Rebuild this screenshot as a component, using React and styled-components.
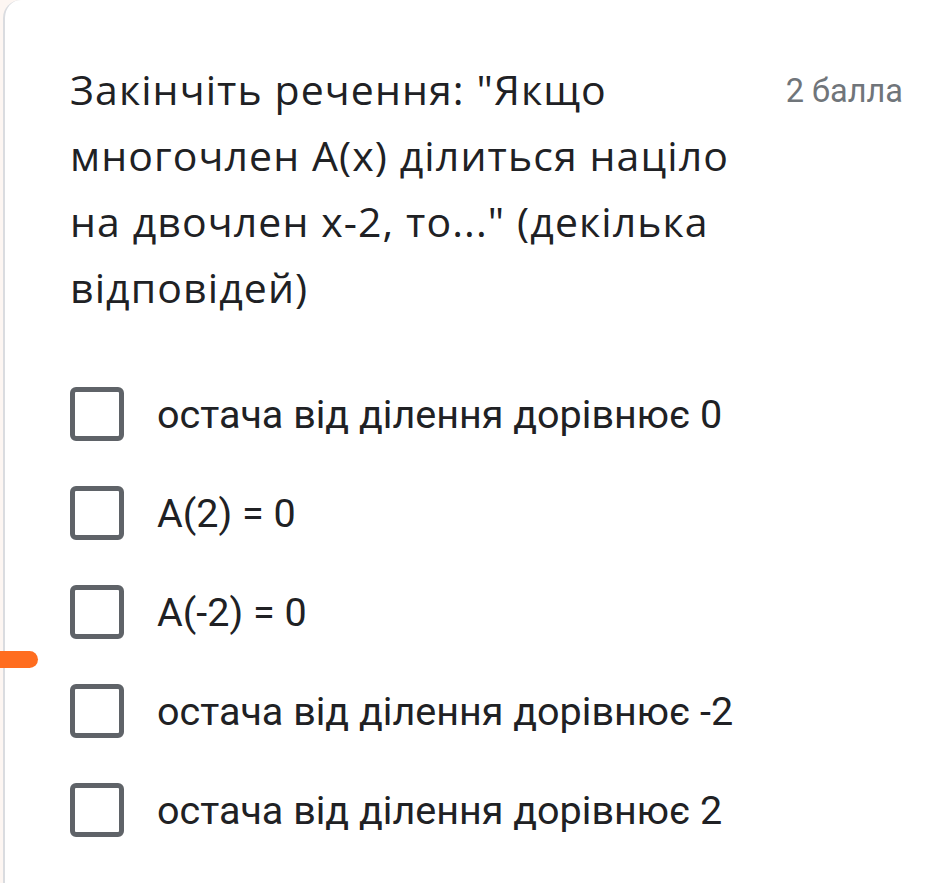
import { createGlobalStyle, styled } from "styled-components";

const GlobalStyle = createGlobalStyle`
  html, body {
    margin: 0;
    background: #fdf6f2;
  }
  body {
    font-family: Roboto, "Liberation Sans", sans-serif;
  }
`;

const TITLE_LINES = [
  'Закінчіть речення: "Якщо',
  "многочлен A(x) ділиться націло",
  'на двочлен x-2, то..." (декілька',
  "відповідей)",
];

const OPTIONS = [
  "остача від ділення дорівнює 0",
  "A(2) = 0",
  "A(-2) = 0",
  "остача від ділення дорівнює -2",
  "остача від ділення дорівнює 2",
];

const App = () => {
  return (
    <>
      <GlobalStyle />
      <Page>
        <Card>
          <Header>
            <Title>
              {TITLE_LINES.map((line, i) => (
                <TitleLine key={i}>{line}</TitleLine>
              ))}
            </Title>
            <Points>2 балла</Points>
          </Header>
          <OptionList>
            {OPTIONS.map((label, i) => (
              <Option key={i}>
                <Checkbox />
                <OptionLabel>{label}</OptionLabel>
              </Option>
            ))}
          </OptionList>
        </Card>
        <ErrorMark />
      </Page>
    </>
  );
};

export default App;

const Page = styled.div`
  position: relative;
  width: 944px;
  height: 883px;
  overflow: hidden;
  padding-left: 3px;
  box-sizing: border-box;
`;

const Card = styled.div`
  height: 100%;
  background: #fff;
  border-left: 2px solid #dadce0;
  border-top-left-radius: 18px;
  box-sizing: border-box;
  padding: 56px 41px 0 65px;
`;

const Header = styled.div`
  display: flex;
  justify-content: space-between;
  align-items: flex-start;
`;

const Title = styled.div`
  font-family: "Open Sans", "Noto Sans", sans-serif;
  font-size: 41px;
  line-height: 66px;
  letter-spacing: 1.1px;
  color: #202124;
`;

const TitleLine = styled.div`
  white-space: nowrap;
`;

const Points = styled.div`
  margin-top: 2px;
  font-family: Roboto, sans-serif;
  font-size: 32.5px;
  line-height: 66px;
  color: #70757a;
  white-space: nowrap;
`;

const OptionList = styled.div`
  display: flex;
  flex-direction: column;
  gap: 45px;
  margin-top: 67px;
`;

const Option = styled.div`
  display: flex;
  align-items: center;
  height: 54px;
`;

const Checkbox = styled.div`
  width: 54px;
  height: 54px;
  box-sizing: border-box;
  border: 5px solid #5f6368;
  border-radius: 6px;
  flex-shrink: 0;
`;

const OptionLabel = styled.div`
  margin-left: 33px;
  font-family: Roboto, sans-serif;
  font-size: 39.5px;
  color: #202124;
  white-space: nowrap;
`;

const ErrorMark = styled.div`
  position: absolute;
  left: 0;
  top: 651px;
  width: 38px;
  height: 17px;
  background: #ff6d1f;
  border-radius: 0 9px 9px 0;
`;
